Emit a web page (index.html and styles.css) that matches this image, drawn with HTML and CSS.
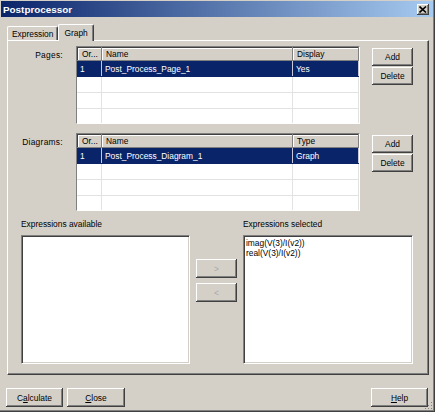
FILE: index.html
```html
<!DOCTYPE html>
<html>
<head>
<meta charset="utf-8">
<link rel="stylesheet" href="styles.css">
</head>
<body>
<div class="window">
  <div class="titlebar">
    <span class="title">Postprocessor</span>
    <span class="tb-close"><svg width="8" height="7" viewBox="0 0 8 7"><path d="M0.5 0.5 L7 6.5 M7 0.5 L0.5 6.5" stroke="#000" stroke-width="1.6"/></svg></span>
  </div>
  <div class="tabs">
    <div class="tab">Expression</div>
    <div class="tab active">Graph</div>
  </div>
  <div class="panel">
    <div class="section">
      <div class="sec-label">Pages:</div>
      <div class="table">
        <div class="row head"><div class="cell c1">Or...</div><div class="cell c2">Name</div><div class="cell c3">Display</div></div>
        <div class="row sel"><div class="cell c1">1</div><div class="cell c2">Post_Process_Page_1</div><div class="cell c3">Yes</div></div>
        <div class="row"><div class="cell c1"></div><div class="cell c2"></div><div class="cell c3"></div></div>
        <div class="row"><div class="cell c1"></div><div class="cell c2"></div><div class="cell c3"></div></div>
        <div class="row"><div class="cell c1"></div><div class="cell c2"></div><div class="cell c3"></div></div>
      </div>
      <div class="side-buttons">
        <button class="btn">Add</button>
        <button class="btn">Delete</button>
      </div>
    </div>
    <div class="section second">
      <div class="sec-label">Diagrams:</div>
      <div class="table">
        <div class="row head"><div class="cell c1">Or...</div><div class="cell c2">Name</div><div class="cell c3">Type</div></div>
        <div class="row sel"><div class="cell c1">1</div><div class="cell c2">Post_Process_Diagram_1</div><div class="cell c3">Graph</div></div>
        <div class="row"><div class="cell c1"></div><div class="cell c2"></div><div class="cell c3"></div></div>
        <div class="row"><div class="cell c1"></div><div class="cell c2"></div><div class="cell c3"></div></div>
        <div class="row"><div class="cell c1"></div><div class="cell c2"></div><div class="cell c3"></div></div>
      </div>
      <div class="side-buttons">
        <button class="btn">Add</button>
        <button class="btn">Delete</button>
      </div>
    </div>
    <div class="exprs">
      <div class="expr-col left">
        <div class="expr-label">Expressions available</div>
        <div class="listbox"></div>
      </div>
      <div class="move-buttons">
        <button class="btn move disabled">&gt;</button>
        <button class="btn move disabled">&lt;</button>
      </div>
      <div class="expr-col right">
        <div class="expr-label">Expressions selected</div>
        <div class="listbox">
          <div class="item">imag(V(3)/I(v2))</div>
          <div class="item">real(V(3)/I(v2))</div>
        </div>
      </div>
    </div>
  </div>
  <div class="footer">
    <button class="btn foot w57">C<u>a</u>lculate</button>
    <button class="btn foot w58"><u>C</u>lose</button>
    <span class="spacer"></span>
    <button class="btn foot w57"><u>H</u>elp</button>
  </div>
  <svg class="grip" width="10" height="10" viewBox="0 0 10 10">
    <rect x="8" y="2" width="1" height="1" fill="#808080"/>
    <rect x="5" y="5" width="1" height="1" fill="#808080"/>
    <rect x="8" y="5" width="1" height="1" fill="#808080"/>
    <rect x="2" y="8" width="1" height="1" fill="#808080"/>
    <rect x="5" y="8" width="1" height="1" fill="#808080"/>
    <rect x="8" y="8" width="1" height="1" fill="#808080"/>
  </svg>
</div>
</body>
</html>
```
FILE: styles.css
```css
body {
  margin: 0;
  background: #d4d0c8;
  font-family: "Liberation Sans", Arial, sans-serif;
  font-size: 8.4px;
  color: #000;
}

.window {
  position: relative;
  width: 435px;
  height: 412px;
  box-sizing: border-box;
  padding-top: 1px;
  display: flex;
  flex-direction: column;
  border-right: 1px solid #404040;
  border-bottom: 1px solid #404040;
  box-shadow: inset -1px -1px #808080;
}

.titlebar {
  height: 16px;
  margin: 0 1px 0 1px;
  padding: 0 4px 0 2px;
  display: flex;
  align-items: center;
  background: linear-gradient(to right, #0a246a, #a6caf0);
}

.title {
  flex: 1;
  color: #fff;
  font-weight: bold;
  font-size: 9.9px;
}

.tb-close {
  width: 12px;
  height: 11px;
  display: flex;
  align-items: center;
  justify-content: center;
  background: #d4d0c8;
  box-shadow: inset -1px -1px #404040, inset 1px 1px #fff, inset -2px -2px #808080;
}

.tabs {
  height: 23px;
  padding-left: 7px;
  display: flex;
  align-items: flex-end;
}

.tab {
  height: 14px;
  box-sizing: border-box;
  padding: 0 4px;
  display: flex;
  align-items: center;
  border-top: 1px solid #fff;
  border-left: 1px solid #fff;
  border-right: 1px solid #404040;
  box-shadow: inset -1px 0 #808080;
  border-radius: 2px 2px 0 0;
}

.tab.active {
  position: relative;
  z-index: 1;
  height: 17px;
  margin-bottom: -1px;
  padding: 0 5px 1px 5px;
  background: #d4d0c8;
}

.panel {
  width: 422px;
  height: 335px;
  margin-left: 7px;
  box-sizing: border-box;
  padding-top: 5px;
  display: flex;
  flex-direction: column;
  border-top: 1px solid #fff;
  border-left: 1px solid #fff;
  border-right: 1px solid #404040;
  border-bottom: 1px solid #404040;
  box-shadow: inset -1px -1px #808080;
}

.section {
  display: flex;
  align-items: flex-start;
}

.section.second {
  margin-top: 9px;
}

.sec-label {
  width: 55px;
  text-align: right;
  padding-top: 4px;
  letter-spacing: 0.3px;
}

.table {
  width: 284px;
  height: 78px;
  margin-left: 13px;
  box-sizing: border-box;
  overflow: hidden;
  background: #fff;
  border-top: 1px solid #808080;
  border-left: 1px solid #808080;
  border-right: 1px solid #fff;
  border-bottom: 1px solid #fff;
}

.table-inner {
  height: 100%;
}

.table .row {
  display: grid;
  grid-template-columns: 25px 191px 1fr;
  height: 16px;
  box-sizing: border-box;
  border-bottom: 1px solid #e2e2e2;
}

.table .row.head {
  height: 14px;
  border-bottom: 0;
  background: #d4d0c8;
  box-shadow: inset 1px 1px #404040;
}

.cell {
  box-sizing: border-box;
  padding-left: 3px;
  display: flex;
  align-items: center;
  white-space: nowrap;
  overflow: hidden;
  border-right: 1px solid #e2e2e2;
}

.row.head .cell {
  padding-left: 4px;
  border-right: 1px solid #808080;
  border-bottom: 1px solid #808080;
  box-shadow: inset 1px 1px #fff;
}

.row.head .cell.c1 {
  box-shadow: inset 1px 1px #404040, inset 2px 2px #fff;
  padding-left: 5px;
}

.row.head .cell.c2,
.row.head .cell.c3 {
  box-shadow: inset 0 1px #404040, inset 1px 2px #fff;
}

.row.sel {
  background: #0a246a;
  color: #fff;
  border-bottom-color: #0a246a;
}

.row.sel .cell {
  border-right-color: #c8c8d8;
}

.row.sel .cell.c1 {
  padding-left: 3px;
}

.side-buttons {
  width: 41px;
  margin-left: 12px;
  margin-top: 2px;
  display: flex;
  flex-direction: column;
  gap: 1px;
}

.btn {
  height: 18px;
  padding: 0;
  border: 0;
  font: inherit;
  color: #000;
  background: #d4d0c8;
  box-shadow: inset -1px -1px #404040, inset 1px 1px #fff, inset -2px -2px #808080;
}

.exprs {
  display: flex;
  padding-left: 13px;
  margin-top: 8px;
}

.expr-col.left {
  width: 169px;
}

.expr-col.right {
  width: 170px;
}

.expr-label {
  height: 11px;
  line-height: 11px;
  margin-bottom: 5px;
}

.listbox {
  height: 129px;
  box-sizing: border-box;
  padding: 2px 1px;
  background: #fff;
  border-top: 1px solid #808080;
  border-left: 1px solid #808080;
  border-right: 1px solid #fff;
  border-bottom: 1px solid #fff;
  box-shadow: inset 1px 1px #404040, inset -1px -1px #d4d0c8;
}

.item {
  padding-left: 1px;
  line-height: 10px;
}

.move-buttons {
  width: 41px;
  margin: 0 6px;
  padding-top: 40px;
  display: flex;
  flex-direction: column;
  gap: 5px;
}

.btn.move {
  height: 19px;
}

.btn.disabled {
  color: #a8a8a8;
}

.footer {
  margin-top: 13px;
  padding: 0 6px;
  display: flex;
  gap: 4px;
}

.spacer {
  flex: 1;
}

.btn.foot {
  height: 19px;
}

.w57 {
  width: 57px;
}

.w58 {
  width: 58px;
}

.grip {
  position: absolute;
  right: 1px;
  bottom: 1px;
}
```
